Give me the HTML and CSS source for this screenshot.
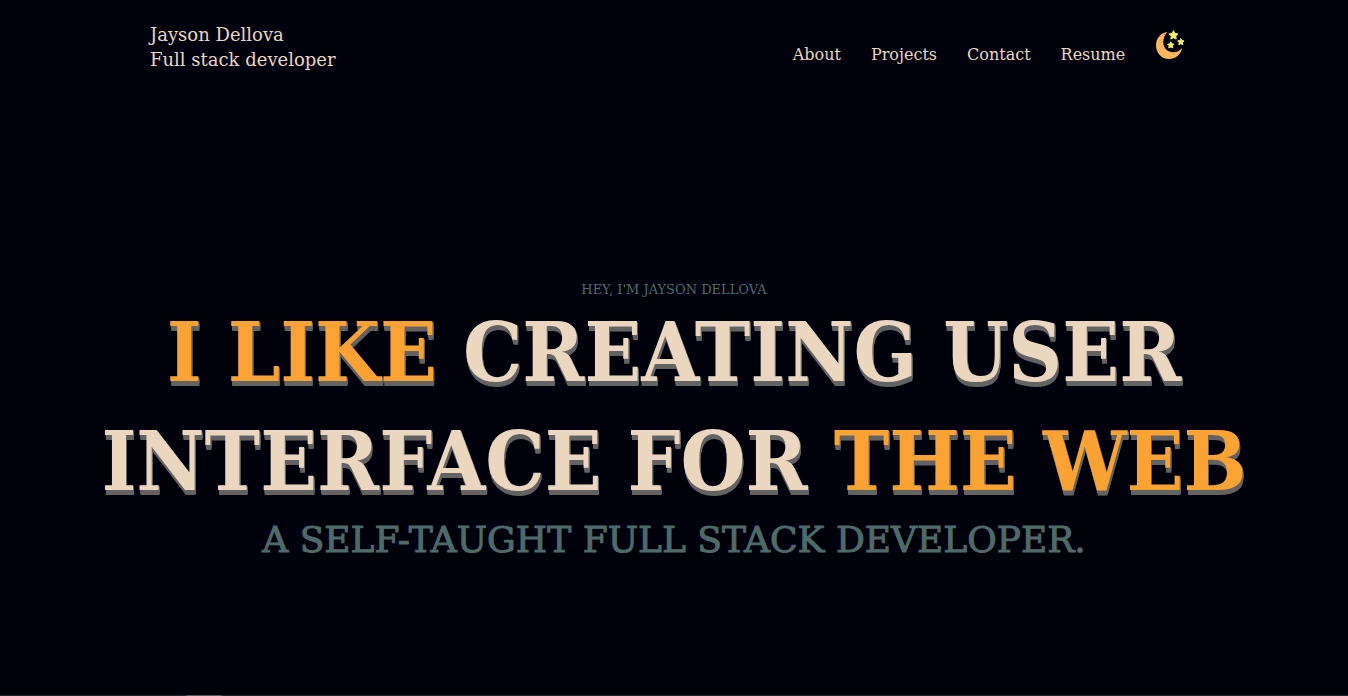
FILE: index.html
```html
<!DOCTYPE html>
<html lang="en">
<head>
<meta charset="utf-8">
<meta name="viewport" content="width=device-width, initial-scale=1">
<title>Jayson Dellova</title>
<link rel="stylesheet" href="styles.css">
</head>
<body>
<header class="header">
  <a class="brand" href="#home">Jayson Dellova<br>Full stack developer</a>
  <nav class="nav">
    <a href="#about">About</a>
    <a href="#projects">Projects</a>
    <a href="#contact">Contact</a>
    <a href="#resume">Resume</a>
    <button class="theme" type="button" aria-label="Toggle theme">
      <svg viewBox="0 0 30 30" aria-hidden="true">
        <path fill="#ffb75e" d="M12.500 2C5.500 2.800 1 8.500 1 15.500C1 23 6.500 29 14 29C20.500 29 26 24.500 27.200 17.500C25.500 20.500 22.300 22.300 18.500 22.300C12.500 22.300 8.300 18.300 8.300 12.300C8.300 8 9.800 4.200 12.500 2Z"/>
        <g fill="#f5f06a" stroke="#f5f06a" stroke-width="1" stroke-linejoin="round">
          <path d="M18.500.7l1.400 2.700 3 .5-2.200 2.200.5 3-2.700-1.400-2.700 1.400.5-3-2.200-2.200 3-.5z"/>
          <path d="M25.800 8.500l1 2 2.200.4-1.600 1.600.4 2.200-2-1-2 1 .4-2.200-1.600-1.600 2.200-.4z"/>
          <path d="M15.800 11.800l1 2 2.200.4-1.600 1.600.4 2.200-2-1-2 1 .4-2.200-1.600-1.600 2.200-.4z"/>
        </g>
      </svg>
    </button>
  </nav>
</header>
<main class="hero" id="home">
  <p class="greeting">Hey, I'm Jayson Dellova</p>
  <h1 class="headline"><span class="accent">I like</span> creating user <br>interface for <span class="accent">the web</span></h1>
  <p class="tagline">A self-taught full stack developer.</p>
</main>
<div class="rule"></div>
</body>
</html>
```
FILE: styles.css
```css
* { box-sizing: border-box; }
body {
  margin: 0;
  min-height: 100vh;
  display: flex;
  flex-direction: column;
  background: #00000d;
  color: #ebd7bf;
  font-family: "DejaVu Serif", serif;
}
a { color: inherit; text-decoration: none; }
.header {
  display: flex;
  justify-content: space-between;
  align-items: flex-start;
  padding: 22px 12% 0 150px;
}
.brand { font-size: 18px; line-height: 25px; }
.nav {
  display: flex;
  align-items: flex-start;
  gap: 30px;
  padding-top: 8px;
  padding-right: 1px;
  font-size: 16px;
  line-height: 24px;
}
.nav a { padding-top: 13px; }
.theme {
  width: 30px;
  height: 30px;
  padding: 0;
  border: 0;
  background: none;
  cursor: pointer;
}
.theme svg { display: block; width: 30px; height: 30px; }
.hero {
  flex: 1;
  display: flex;
  flex-direction: column;
  align-items: center;
  justify-content: center;
  padding-top: 142px;
  padding-bottom: 64px;
  text-align: center;
  text-transform: uppercase;
}
.greeting { margin: 0; font-size: 13px; line-height: 16px; color: #4f6b69; }
.headline {
  margin: 0;
  font-family: "DejaVu Serif Condensed", "DejaVu Serif", serif;
  font-size: 83px;
  font-weight: 700;
  line-height: 109px;
  white-space: nowrap;
  text-shadow: 1px 1px #636363, 1px 2px #636363, 1px 3px #636363, 1px 4px #636363, 1px 5px #636363;
}
.accent { color: #fba235; }
.tagline {
  margin: 0;
  font-size: 36px;
  line-height: 48px;
  color: #4f6b69;
  -webkit-text-stroke: 1px #4f6b69;
}
.rule {
  height: 1px;
  background: linear-gradient(90deg, transparent 186px, #57565a 186px 222px, transparent 222px) #222127;
}
```
